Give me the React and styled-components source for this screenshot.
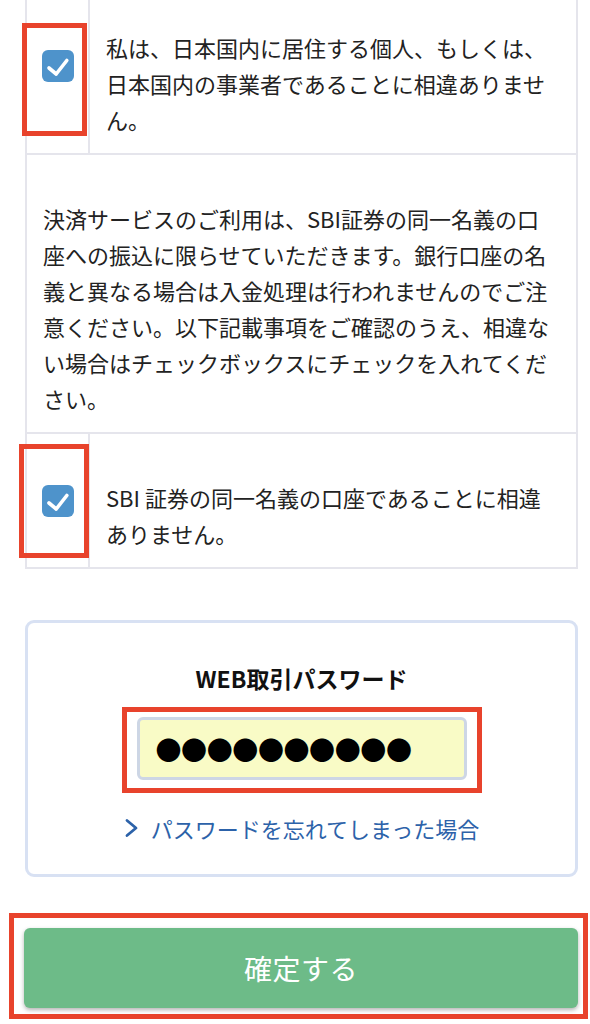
import React from "react";
import styled, { createGlobalStyle } from "styled-components";

const GlobalStyle = createGlobalStyle`
  html, body {
    margin: 0;
    padding: 0;
    background: #ffffff;
  }
  body {
    font-family: "Noto Sans CJK JP", "Noto Sans", "Liberation Sans", sans-serif;
    color: #222222;
    -webkit-font-smoothing: antialiased;
  }
  * { box-sizing: border-box; }
`;

const Page = styled.div`
  width: 590px;
  height: 1024px;
  overflow: hidden;
  display: flex;
  flex-direction: column;
`;

const Table = styled.div`
  margin: -16px 0 0 25px;
  width: 553px;
  border-left: 2px solid #e5e5ec;
  border-right: 2px solid #e5e5ec;
  border-bottom: 2px solid #e5e5ec;
  display: flex;
  flex-direction: column;
`;

const Row = styled.div`
  display: grid;
  grid-template-columns: ${(p) => (p.$full ? "1fr" : "63px 1fr")};
  border-bottom: ${(p) => (p.$last ? "none" : "2px solid #e5e5ec")};
`;

const CheckCell = styled.div`
  position: relative;
  display: flex;
  align-items: center;
  justify-content: center;
  border-right: 2px solid #e5e5ec;
  padding-bottom: ${(p) => p.$shift || 0}px;
`;

const TextCell = styled.div`
  font-size: 22px;
  line-height: 36px;
  padding: 45px ${(p) => p.$right}px 16px 16px;
  color: #222;
`;

const Box = styled.div`
  width: 32px;
  height: 32px;
  border-radius: 6px;
  background: #4e93cb;
  display: flex;
  align-items: center;
  justify-content: center;
`;

const Highlight = styled.div`
  position: absolute;
  left: ${(p) => p.$l}px;
  right: ${(p) => p.$r}px;
  top: ${(p) => p.$t}px;
  bottom: ${(p) => p.$b}px;
  border: 5px solid #e8432c;
  pointer-events: none;
`;

const Panel = styled.div`
  margin: 51px 0 0 25px;
  width: 553px;
  border: 3px solid #d8e1f3;
  border-radius: 9px;
  padding: 37px 0 28px;
  display: flex;
  flex-direction: column;
  align-items: center;
`;

const Title = styled.div`
  font-size: 23px;
  line-height: 36px;
  font-weight: 700;
  color: #111;
`;

const InputFrame = styled.div`
  margin-top: 11px;
  width: 360px;
  border: 5px solid #e8432c;
  padding: 5px 10px 8px;
`;

const PasswordBox = styled.div`
  height: 63px;
  border: 3px solid #cdd6e5;
  border-radius: 6px;
  background: #f9fbc6;
  display: flex;
  align-items: center;
  padding-left: 16px;
  font-family: "Noto Sans CJK JP", "DejaVu Sans", sans-serif;
  font-size: 26px;
  letter-spacing: -0.4px;
  color: #000;
`;

const ForgotLink = styled.a`
  margin-top: 17px;
  display: flex;
  align-items: center;
  gap: 12px;
  font-size: 22px;
  line-height: 36px;
  color: #2c62a9;
  text-decoration: none;
`;

const ButtonFrame = styled.div`
  margin: 36px 0 0 9px;
  width: 579px;
  border: 5px solid #e8432c;
  padding: 10px 5px 6px 10px;
`;

const ConfirmButton = styled.button`
  width: 100%;
  height: 80px;
  border: none;
  border-radius: 6px;
  background: #6dbb88;
  box-shadow: 0 2px 4px rgba(0, 0, 0, 0.3);
  color: #ffffff;
  font-family: "Noto Sans CJK JP", "Noto Sans", sans-serif;
  font-size: 28px;
  font-weight: 400;
  letter-spacing: 0.5px;
  cursor: pointer;
`;

const Check = () => (
  <Box>
    <svg width="32" height="32" viewBox="0 0 32 32">
      <polyline
        points="7,18 14.2,24 24.8,10.5"
        fill="none"
        stroke="#ffffff"
        strokeWidth="3.6"
        strokeLinecap="round"
        strokeLinejoin="round"
      />
    </svg>
  </Box>
);

const Chevron = () => (
  <svg width="15" height="20" viewBox="0 0 15 20">
    <polyline
      points="3,2.5 12,10 3,17.5"
      fill="none"
      stroke="#2c62a9"
      strokeWidth="2.8"
      strokeLinecap="round"
      strokeLinejoin="round"
    />
  </svg>
);

export default function App() {
  return (
    <Page>
      <GlobalStyle />
      <Table>
        <Row>
          <CheckCell $shift={5}>
            <Check />
            <Highlight $l={-5} $r={1} $t={39} $b={17} />
          </CheckCell>
          <TextCell $right={10}>
            私は、日本国内に居住する個人、もしくは、日本国内の事業者であることに相違ありません。
          </TextCell>
        </Row>
        <Row $full>
          <TextCell $right={20}>
            決済サービスのご利用は、SBI証券の同一名義の口座への振込に限らせていただきます。銀行口座の名義と異なる場合は入金処理は行われませんのでご注意ください。以下記載事項をご確認のうえ、相違ない場合はチェックボックスにチェックを入れてください。
          </TextCell>
        </Row>
        <Row $last>
          <CheckCell>
            <Check />
            <Highlight $l={-8} $r={-1} $t={10} $b={9} />
          </CheckCell>
          <TextCell $right={22}>
            SBI 証券の同一名義の口座であることに相違ありません。
          </TextCell>
        </Row>
      </Table>

      <Panel>
        <Title>WEB取引パスワード</Title>
        <InputFrame>
          <PasswordBox>●●●●●●●●●●</PasswordBox>
        </InputFrame>
        <ForgotLink href="#">
          <Chevron />
          パスワードを忘れてしまった場合
        </ForgotLink>
      </Panel>

      <ButtonFrame>
        <ConfirmButton type="button">確定する</ConfirmButton>
      </ButtonFrame>
    </Page>
  );
}
